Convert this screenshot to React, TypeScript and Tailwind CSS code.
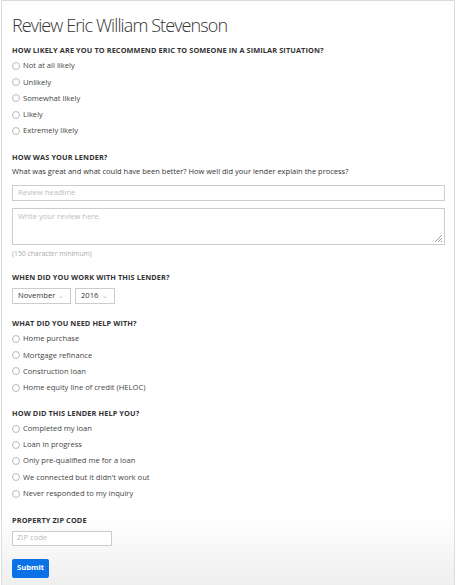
const likely = ['Not at all likely', 'Unlikely', 'Somewhat likely', 'Likely', 'Extremely likely'];
const helpWith = ['Home purchase', 'Mortgage refinance', 'Construction loan', 'Home equity line of credit (HELOC)'];
const helped = [
  'Completed my loan',
  'Loan in progress',
  'Only pre-qualified me for a loan',
  "We connected but it didn't work out",
  'Never responded to my inquiry',
];

function Label({ children, className = '' }: { children: React.ReactNode; className?: string }) {
  return (
    <h3 className={`text-[7.35px] font-bold uppercase leading-[10px] tracking-[0.1px] text-[#333] ${className}`}>
      {children}
    </h3>
  );
}

function Radio({ label }: { label: string }) {
  return (
    <label className="flex h-[16.2px] items-center gap-[3px] text-[7.6px] text-[#444]">
      <span className="h-[8px] w-[8px] rounded-full border border-[#b9b9b9] bg-white" />
      {label}
    </label>
  );
}

function Select({ value, className }: { value: string; className: string }) {
  return (
    <div className={`flex h-[16px] items-center justify-between border border-[#ccc] bg-white pl-[5px] pr-[6px] text-[7.6px] text-[#333] ${className}`}>
      <span>{value}</span>
      <span className="text-[7px] text-[#bbb]">⌄</span>
    </div>
  );
}

export default function App() {
  return (
    <div className="h-[585px] w-[456px] bg-white font-['Open_Sans',sans-serif]">
      <div className="ml-px h-[585px] w-[454px] border border-b-0 border-[#dcdcdc] bg-linear-to-b from-white from-88% to-[#efefef] pl-[10px] pr-[8px]">
        <h1 className="mt-[11px] text-[18px] font-light leading-[26px] tracking-[-0.9px] text-[#333]">Review Eric William Stevenson</h1>

        <Label className="mt-[7px]">How likely are you to recommend Eric to someone in a similar situation?</Label>
        <div className="mt-[3px] flex flex-col">
          {likely.map((l) => (
            <Radio key={l} label={l} />
          ))}
        </div>

        <Label className="mt-[13px]">How was your lender?</Label>
        <p className="mt-[4px] text-[7.5px] leading-[11px] text-[#333]">
          What was great and what could have been better? How well did your lender explain the process?
        </p>
        <div className="mt-[8px] flex h-[16px] w-[433px] items-center border border-[#ccc] px-[5px] text-[7.6px] text-[#bbb]">
          Review headline
        </div>
        <div className="relative mt-[7px] h-[37px] w-[433px] border border-[#ccc] px-[5px] py-[2px] text-[7.6px] text-[#bbb]">
          Write your review here.
          <svg className="absolute bottom-[1px] right-[1px]" width="9" height="9" viewBox="0 0 9 9">
            <path d="M8 1L1 8M8 4L4 8M8 7L7 8" stroke="#888" strokeWidth="0.8" />
          </svg>
        </div>
        <p className="mt-[4px] text-[6.8px] leading-[10px] text-[#aaa]">(150 character minimum)</p>

        <Label className="mt-[13px]">When did you work with this lender?</Label>
        <div className="mt-[6px] flex gap-[4px]">
          <Select value="November" className="w-[59px]" />
          <Select value="2016" className="w-[40px]" />
        </div>

        <Label className="mt-[14px]">What did you need help with?</Label>
        <div className="mt-[3px] flex flex-col">
          {helpWith.map((l) => (
            <Radio key={l} label={l} />
          ))}
        </div>

        <Label className="mt-[12px]">How did this lender help you?</Label>
        <div className="mt-[3px] flex flex-col">
          {helped.map((l) => (
            <Radio key={l} label={l} />
          ))}
        </div>

        <Label className="mt-[13px]">Property zip code</Label>
        <div className="mt-[6px] flex h-[15px] w-[100px] items-center border border-[#ccc] bg-white px-[4px] text-[7.6px] text-[#bbb]">
          ZIP code
        </div>

        <button className="mt-[13px] flex h-[19px] w-[37px] items-center justify-center rounded-[2px] bg-[#0a72e6] text-[7.6px] font-bold text-white">
          Submit
        </button>
      </div>
    </div>
  );
}
